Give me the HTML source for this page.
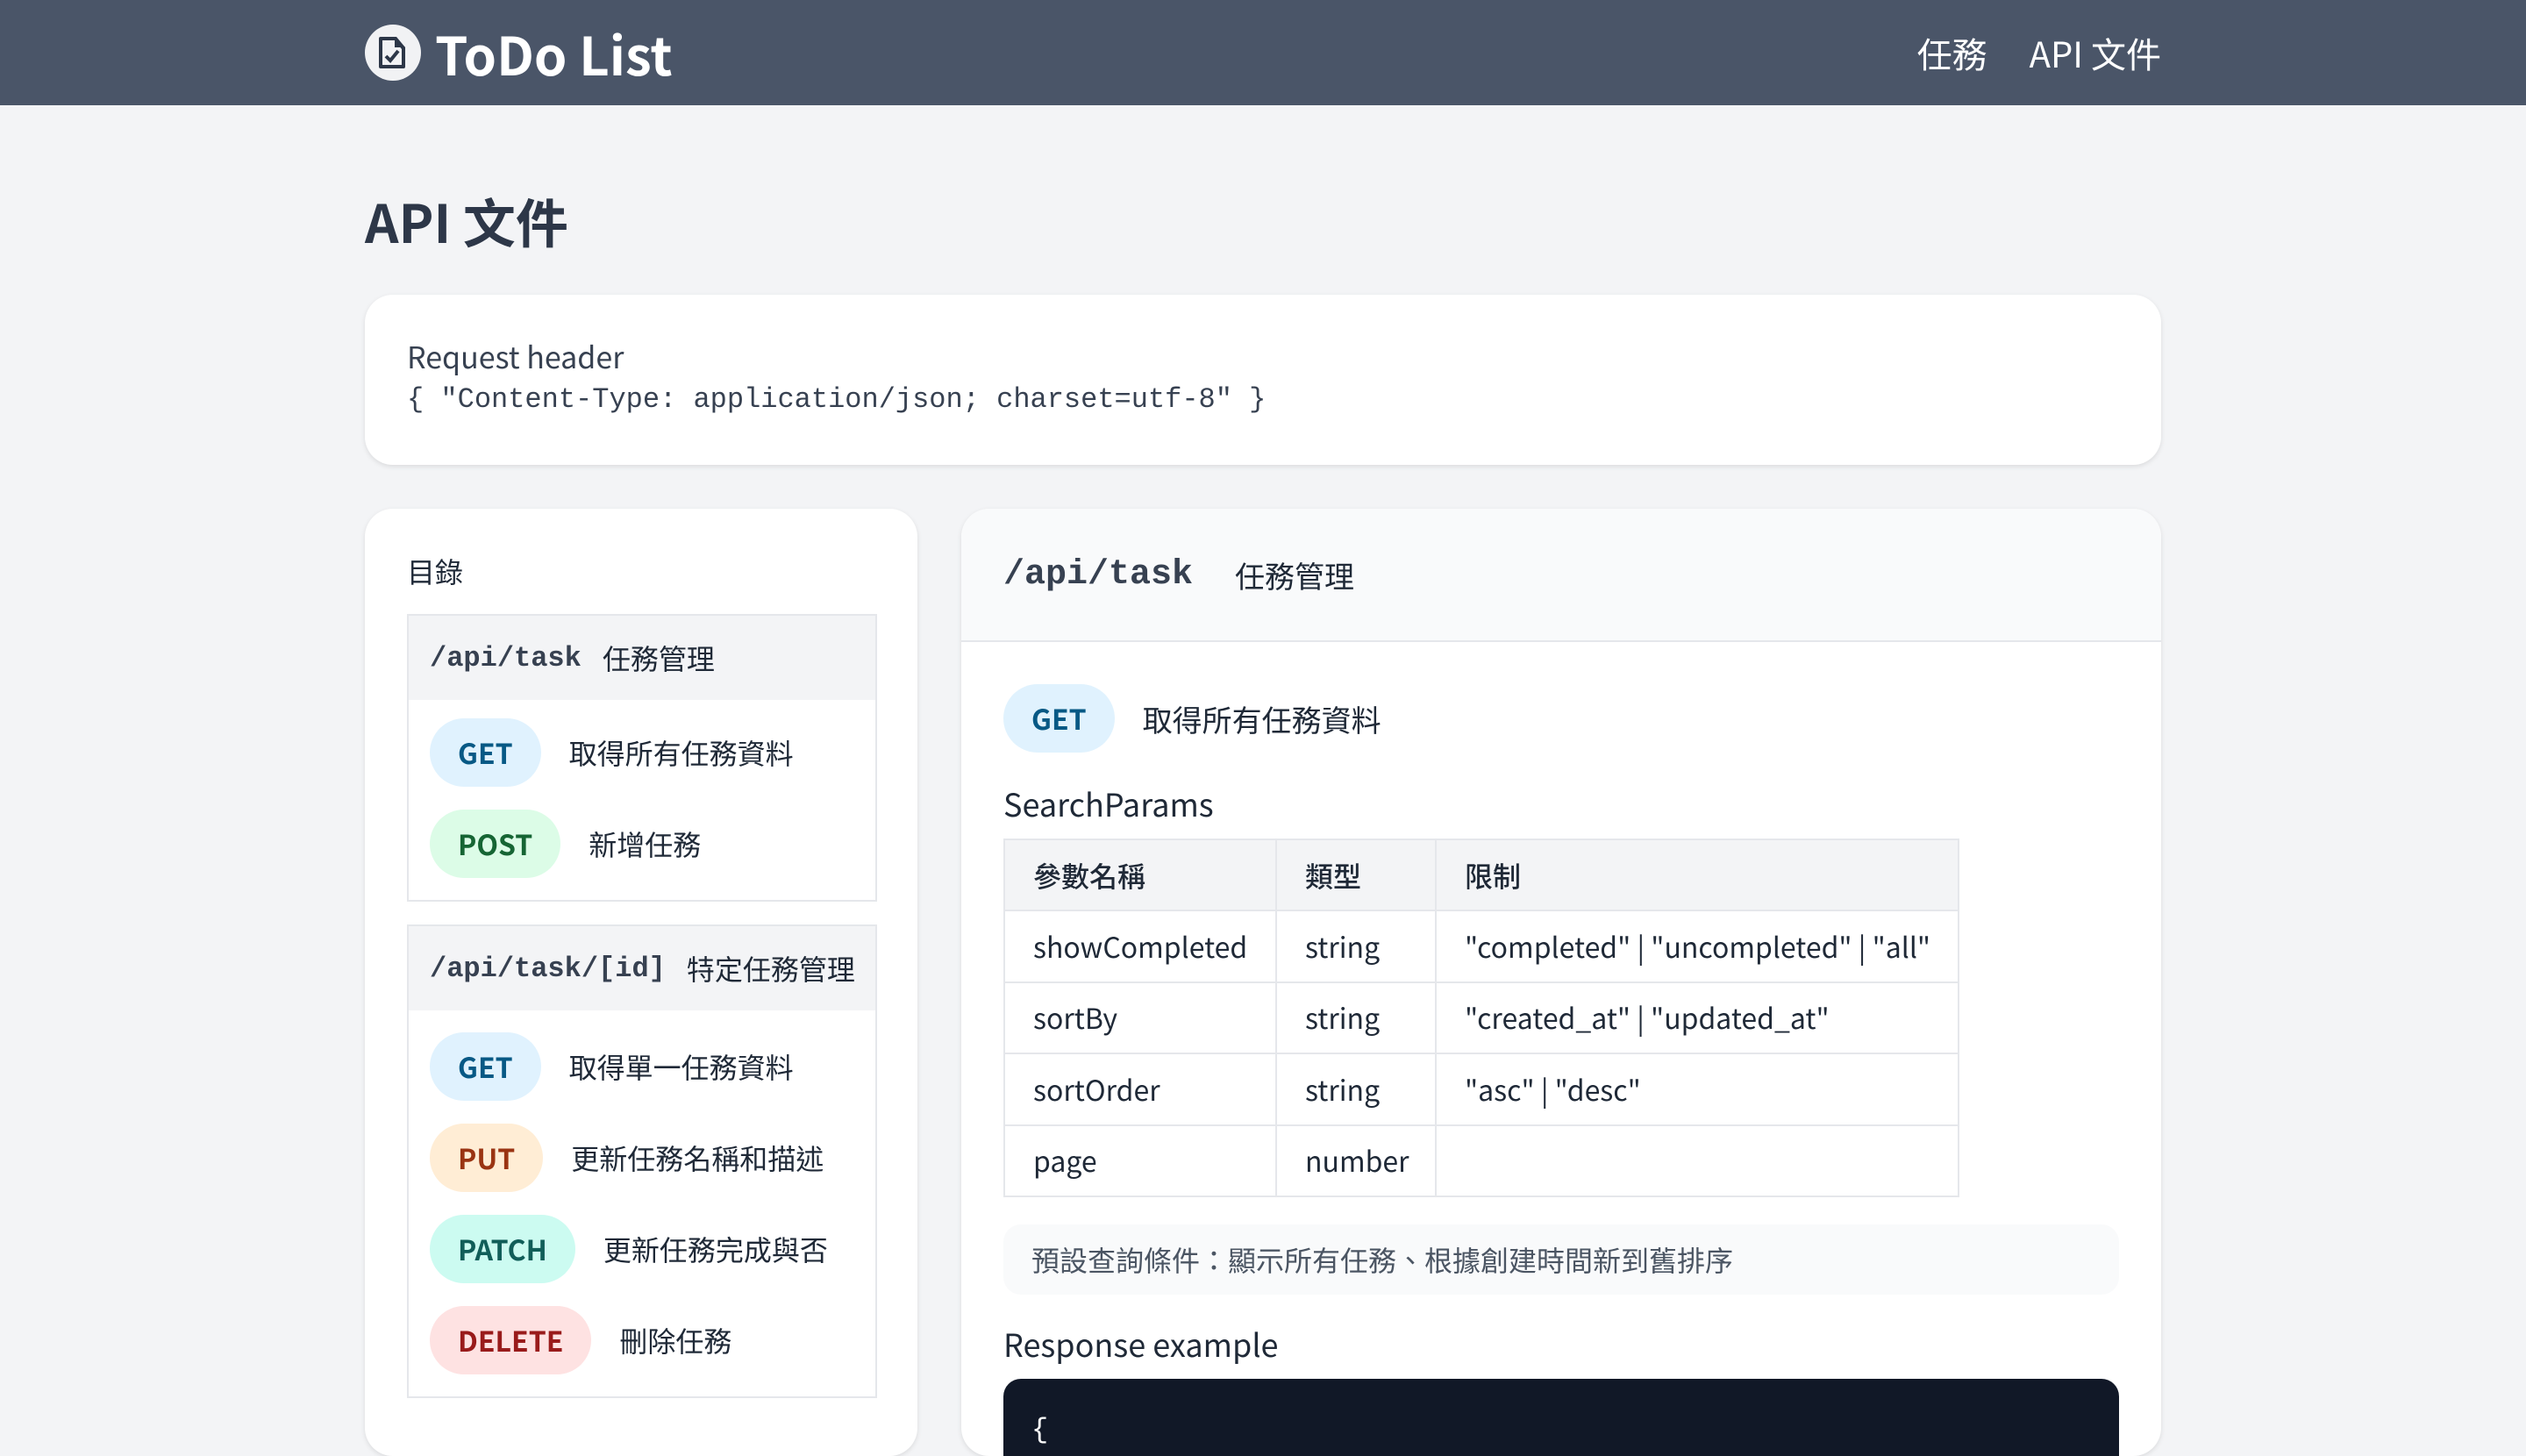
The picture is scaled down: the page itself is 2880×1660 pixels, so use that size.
<!DOCTYPE html>
<html><head><meta charset="utf-8"><style>
html{zoom:2}
*{box-sizing:border-box;margin:0;padding:0}
body{width:1440px;height:810px;overflow:hidden;background:#f3f4f6;font-family:"Noto Sans CJK TC","Liberation Sans",sans-serif;color:#1f2937}
.mono{font-family:"Liberation Mono","DejaVu Sans Mono",monospace}
header{height:60px;background:#4a5568;color:#fff;position:relative}
.logo{position:absolute;left:208px;top:0;height:60px;display:flex;align-items:center;gap:8px;font-size:30px;font-weight:700}
.ic{width:32px;height:32px;border-radius:50%;background:#f1f2f4;display:flex;align-items:center;justify-content:center}
nav{position:absolute;right:208px;top:0;height:60px;display:flex;align-items:center;gap:24px;font-size:20px}
h1{position:absolute;left:208px;top:104px;font-size:30px;font-weight:700;color:#2d3748}
.card{position:absolute;background:#fff;border-radius:16px;box-shadow:0 1px 3px rgba(0,0,0,.1)}
.pill{display:inline-flex;align-items:center;justify-content:center;height:39px;padding:0 16px;border-radius:20px;font-weight:700;font-size:16px}
.get{background:#e0f2fe;color:#075985}.post{background:#dcfce7;color:#166534}.put{background:#ffedd5;color:#9a3412}.patch{background:#ccfbf1;color:#115e59}.del{background:#fee2e2;color:#991b1b}
.box{position:absolute;left:24px;width:268px;border:1px solid #e5e7eb}
.bh{height:48px;background:#f3f4f6;display:flex;align-items:center;padding-left:12px;font-size:16px;gap:12px}
.bh b{font-family:"Liberation Mono",monospace;font-size:16px;color:#374151}
.row{height:52px;display:flex;align-items:center;padding-left:12px;gap:16px;font-size:16px}
table{border-collapse:collapse;table-layout:fixed;position:absolute;left:24px;top:188px;width:545px;font-size:16px}
td,th{border:1px solid #e5e7eb;height:40.7px;padding:0 16px;text-align:left;font-weight:400;white-space:nowrap}
th{background:#f3f4f6;font-weight:500}
</style></head><body>
<header>
<div class="logo"><div class="ic"><svg width="18" height="20" viewBox="0 0 18 20"><path d="M2 1h9l5 6v11a1 1 0 0 1-1 1H2a1 1 0 0 1-1-1V2a1 1 0 0 1 1-1z" fill="#2d3748"/><path d="M3 3h7l4 5v9H3z" fill="#f1f2f4"/><path d="M10 1v6h6z" fill="#2d3748"/><path d="M5 12l2.5 2.5L12 9" stroke="#2d3748" stroke-width="2" fill="none"/></svg></div>ToDo List</div>
<nav><span>任務</span><span>API 文件</span></nav>
</header>
<h1>API 文件</h1>
<div class="card" style="left:208px;top:168px;width:1024px;height:97px;padding:24px 24px">
<div style="font-size:17px;line-height:24px;color:#374151;margin-top:-1px">Request header</div>
<div class="mono" style="font-size:16px;line-height:24px;color:#374151;margin-top:1px">{ "Content-Type: application/json; charset=utf-8" }</div>
</div>
<div class="card" style="left:208px;top:290px;width:315px;height:540px">
<div style="position:absolute;left:24px;top:24px;font-size:16px">目錄</div>
<div class="box" style="top:60px"><div class="bh"><b>/api/task</b>任務管理</div>
<div style="padding:4px 0 6px"><div class="row"><span class="pill get">GET</span>取得所有任務資料</div><div class="row"><span class="pill post">POST</span>新增任務</div></div></div>
<div class="box" style="top:237px"><div class="bh"><b>/api/task/[id]</b>特定任務管理</div>
<div style="padding:6px 0 6px"><div class="row"><span class="pill get">GET</span>取得單一任務資料</div><div class="row"><span class="pill put">PUT</span>更新任務名稱和描述</div><div class="row"><span class="pill patch">PATCH</span>更新任務完成與否</div><div class="row"><span class="pill del">DELETE</span>刪除任務</div></div></div>
</div>
<div class="card" style="left:548px;top:290px;width:684px;height:540px;overflow:hidden">
<div style="height:76px;background:#f9fafb;border-bottom:1px solid #e5e7eb;display:flex;align-items:center;padding-left:24px;gap:24px">
<b class="mono" style="font-size:20px;color:#374151">/api/task</b><span style="font-size:17px">任務管理</span></div>
<div style="position:absolute;left:24px;top:100px;display:flex;align-items:center;gap:16px;font-size:17px"><span class="pill get">GET</span>取得所有任務資料</div>
<div style="position:absolute;left:24px;top:155px;font-size:18px">SearchParams</div>
<table><colgroup><col style="width:155px"><col style="width:91px"><col></colgroup><tr><th>參數名稱</th><th>類型</th><th>限制</th></tr>
<tr><td>showCompleted</td><td>string</td><td>"completed" | "uncompleted" | "all"</td></tr>
<tr><td>sortBy</td><td>string</td><td>"created_at" | "updated_at"</td></tr>
<tr><td>sortOrder</td><td>string</td><td>"asc" | "desc"</td></tr>
<tr><td>page</td><td>number</td><td></td></tr></table>
<div style="position:absolute;left:24px;top:408px;width:636px;height:40px;background:#f9fafb;border-radius:10px;font-size:16px;color:#4b5563;display:flex;align-items:center;padding-left:16px">預設查詢條件：顯示所有任務、根據創建時間新到舊排序</div>
<div style="position:absolute;left:24px;top:463px;font-size:18px;font-weight:400">Response example</div>
<div style="position:absolute;left:24px;top:496px;width:636px;height:80px;background:#111827;border-radius:10px;color:#fff;padding:20px 16px" class="mono">{</div>
</div>
</body></html>
